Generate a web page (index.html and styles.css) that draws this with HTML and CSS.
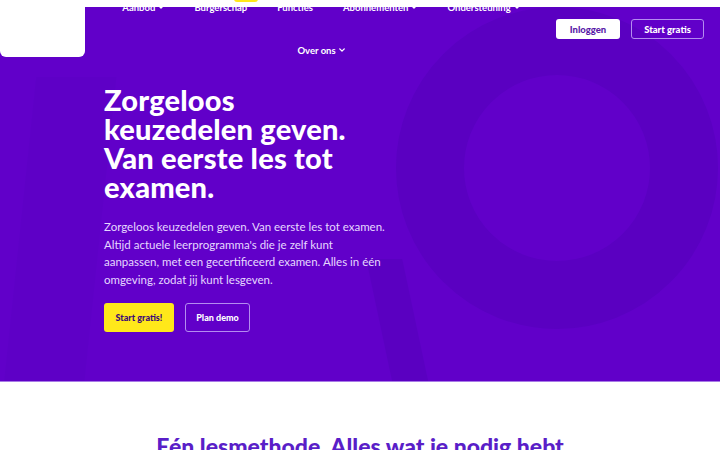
FILE: index.html
```html
<!DOCTYPE html>
<html lang="nl">
<head>
<meta charset="utf-8">
<title>Zorgeloos keuzedelen geven</title>
<link rel="stylesheet" href="styles.css">
</head>
<body>
<div class="page">
  <section class="hero">
    <div class="hero-deco" aria-hidden="true">
      <div class="ring"></div>
      <div class="ring-tail"></div>
      <div class="slab"></div>
    </div>
    <header class="topbar">
      <a class="logo" href="#" aria-label="Home"></a>
      <nav class="menu">
        <a class="menu-item" href="#">Aanbod <svg class="chev" viewBox="0 0 8 5"><path d="M1 1l3 3 3-3"/></svg></a>
        <a class="menu-item" href="#">Burgerschap<span class="badge"></span></a>
        <a class="menu-item" href="#">Functies</a>
        <a class="menu-item" href="#">Abonnementen <svg class="chev" viewBox="0 0 8 5"><path d="M1 1l3 3 3-3"/></svg></a>
        <a class="menu-item" href="#">Ondersteuning <svg class="chev" viewBox="0 0 8 5"><path d="M1 1l3 3 3-3"/></svg></a>
        <a class="menu-item" href="#">Over ons <svg class="chev" viewBox="0 0 8 5"><path d="M1 1l3 3 3-3"/></svg></a>
      </nav>
      <div class="actions">
        <a class="btn btn-white" href="#">Inloggen</a>
        <a class="btn btn-outline btn-small" href="#">Start gratis</a>
      </div>
    </header>
    <div class="hero-body">
      <h1 class="hero-title">Zorgeloos keuzedelen geven. Van eerste les tot examen.</h1>
      <p class="hero-text">Zorgeloos keuzedelen geven. Van eerste les tot examen. Altijd actuele leerprogramma's die je zelf kunt aanpassen, met een gecertificeerd examen. Alles in één omgeving, zodat jij kunt lesgeven.</p>
      <div class="hero-buttons">
        <a class="btn btn-yellow" href="#">Start gratis!</a>
        <a class="btn btn-outline" href="#">Plan demo</a>
      </div>
    </div>
  </section>
  <section class="intro">
    <h2 class="intro-title">Eén lesmethode. Alles wat je nodig hebt</h2>
  </section>
</div>
</body>
</html>
```

FILE: styles.css
```css
* { box-sizing: border-box; }

html, body {
  margin: 0;
  padding: 0;
  background: #ffffff;
}

body {
  font-family: "Lato", "Noto Sans", sans-serif;
  width: 720px;
  height: 450px;
  overflow: hidden;
}

a { text-decoration: none; color: inherit; }

.page { padding-top: 7px; }

/* purple hero block */
.hero {
  position: relative;
  display: flow-root;
  background: #6100c9;
  border-bottom: 1px solid #a77ae6;
  height: 375px;
}

.hero-deco {
  position: absolute;
  inset: 0;
  overflow: hidden;
  pointer-events: none;
}

.ring {
  position: absolute;
  left: 396px;
  top: 0px;
  width: 322px;
  height: 322px;
  border-radius: 50%;
  border: 68px solid #5a00c1;
}

.ring-tail {
  position: absolute;
  left: 380px;
  top: 252px;
  width: 36px;
  height: 130px;
  background: #5a00c1;
  transform: skewX(12deg);
}

.slab {
  position: absolute;
  left: 20px;
  top: 70px;
  width: 80px;
  height: 310px;
  background: #5e00c6;
  transform: skewX(-6deg);
}

/* header */
.topbar {
  position: relative;
  display: flex;
  align-items: flex-start;
  margin-top: -7px;
}

.logo {
  display: block;
  width: 85px;
  height: 57px;
  background: #ffffff;
  border-radius: 0 0 6px 6px;
  flex: none;
}

.menu {
  width: 424px;
  margin-left: 24px;
  display: flex;
  flex-wrap: wrap;
  justify-content: center;
  column-gap: 30px;
  row-gap: 29px;
}

.menu-item {
  position: relative;
  display: inline-flex;
  align-items: center;
  gap: 3px;
  height: 14px;
  font-size: 9.5px;
  font-weight: 700;
  color: #ffffff;
  white-space: nowrap;
}

.chev {
  width: 6px;
  height: 4px;
  fill: none;
  stroke: #ffffff;
  stroke-width: 1.8;
  stroke-linecap: round;
  stroke-linejoin: round;
}

.badge {
  position: absolute;
  left: 40px;
  top: -8px;
  width: 24px;
  height: 10px;
  border-radius: 3px;
  background: #ffe81a;
}

.actions {
  display: flex;
  gap: 11px;
  margin-left: 23px;
  margin-top: 19px;
}

/* buttons */
.btn {
  display: inline-flex;
  align-items: center;
  justify-content: center;
  border-radius: 3px;
  font-weight: 900;
  white-space: nowrap;
}

.actions .btn {
  height: 20px;
  font-size: 9.5px;
}

.btn-white {
  width: 64px;
  background: #ffffff;
  color: #5a1aa8;
}

.btn-small { width: 73px; }

.btn-outline {
  border: 1.5px solid #b48cf0;
  color: #ffffff;
}

.hero-buttons .btn {
  height: 29px;
  font-size: 9px;
}

.btn-yellow {
  width: 70px;
  background: #ffe81a;
  color: #3c0a78;
}

.hero-buttons .btn-outline { width: 65px; }

/* hero copy */
.hero-body {
  position: relative;
  padding-left: 104px;
  margin-top: 28px;
}

.hero-title {
  margin: 0;
  width: 280px;
  font-family: "Lato", sans-serif;
  font-weight: 900;
  font-size: 29px;
  line-height: 29px;
  color: #ffffff;
  letter-spacing: 0.2px;
}

.hero-text {
  margin: 17px 0 0;
  width: 282px;
  font-size: 11.5px;
  line-height: 17.5px;
  color: #e6d8ff;
}

.hero-buttons {
  display: flex;
  gap: 11px;
  margin-top: 15px;
}

/* next section */
.intro {
  padding-top: 49px;
  text-align: center;
}

.intro-title {
  margin: 0;
  font-size: 23px;
  font-weight: 900;
  color: #5a1ec8;
  line-height: 30px;
}
```
